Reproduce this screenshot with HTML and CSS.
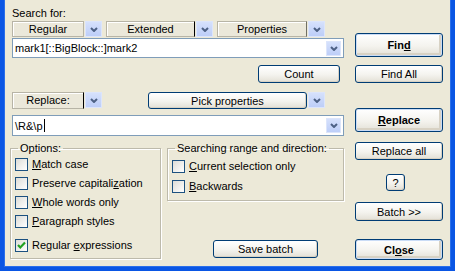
FILE: index.html
```html
<!DOCTYPE html>
<html>
<head>
    <meta charset="UTF-8">
    <title>Find and Replace</title>
    <link rel="stylesheet" href="styles.css">
</head>
<body>
    <div class="window">
        <div class="dialog">
            <div class="main">
                <div class="caption">Search for:</div>
                <div class="picks">
                    <div class="pick">
                        <span class="pick-box w-regular">Regular</span>
                        <span class="arrow"><svg width="8" height="5" viewBox="0 0 8 5"><path d="M1 1 L4 4 L7 1" fill="none" stroke="#4D6185" stroke-width="2"/></svg></span>
                    </div>
                    <div class="pick">
                        <span class="pick-box w-extended dark-edge">Extended</span>
                        <span class="arrow"><svg width="8" height="5" viewBox="0 0 8 5"><path d="M1 1 L4 4 L7 1" fill="none" stroke="#4D6185" stroke-width="2"/></svg></span>
                    </div>
                    <div class="pick pick-last">
                        <span class="pick-box w-properties grey-edge">Properties</span>
                        <span class="arrow"><svg width="8" height="5" viewBox="0 0 8 5"><path d="M1 1 L4 4 L7 1" fill="none" stroke="#4D6185" stroke-width="2"/></svg></span>
                    </div>
                </div>
                <div class="combo">
                    <span class="combo-text">mark1[::BigBlock::]mark2</span>
                    <span class="arrow arrow-in"><svg width="8" height="5" viewBox="0 0 8 5"><path d="M1 1 L4 4 L7 1" fill="none" stroke="#4D6185" stroke-width="2"/></svg></span>
                </div>
                <div class="count-row">
                    <button class="btn btn-count">Count</button>
                </div>
                <div class="picks picks-replace">
                    <div class="pick">
                        <span class="pick-box w-regular dark-edge">Replace:</span>
                        <span class="arrow"><svg width="8" height="5" viewBox="0 0 8 5"><path d="M1 1 L4 4 L7 1" fill="none" stroke="#4D6185" stroke-width="2"/></svg></span>
                    </div>
                    <div class="pick pick-props">
                        <button class="btn btn-pick">Pick properties</button>
                        <span class="arrow"><svg width="8" height="5" viewBox="0 0 8 5"><path d="M1 1 L4 4 L7 1" fill="none" stroke="#4D6185" stroke-width="2"/></svg></span>
                    </div>
                </div>
                <div class="combo combo-replace">
                    <span class="combo-text">\R&amp;\p<span class="caret"></span></span>
                    <span class="arrow arrow-in"><svg width="8" height="5" viewBox="0 0 8 5"><path d="M1 1 L4 4 L7 1" fill="none" stroke="#4D6185" stroke-width="2"/></svg></span>
                </div>
                <div class="groups">
                    <fieldset class="group group-options">
                        <legend>Options:</legend>
                        <div class="check"><span class="box"></span><span><u>M</u>atch case</span></div>
                        <div class="check"><span class="box"></span><span>Preserve capitali<u>z</u>ation</span></div>
                        <div class="check"><span class="box"></span><span><u>W</u>hole words only</span></div>
                        <div class="check"><span class="box"></span><span><u>P</u>aragraph styles</span></div>
                        <div class="check check-last"><span class="box"><svg width="11" height="11" viewBox="0 0 11 11"><path d="M2 5 L4.3 7.5 L9 2.5" fill="none" stroke="#21A121" stroke-width="2.2"/></svg></span><span>Regular <u>e</u>xpressions</span></div>
                    </fieldset>
                    <div class="side">
                        <fieldset class="group group-range">
                            <legend>Searching range and direction:</legend>
                            <div class="check"><span class="box"></span><span><u>C</u>urrent selection only</span></div>
                            <div class="check"><span class="box"></span><span><u>B</u>ackwards</span></div>
                        </fieldset>
                        <button class="btn btn-save">Save batch</button>
                    </div>
                </div>
            </div>
            <div class="actions">
                <button class="btn btn-default btn-find">Fin<u>d</u></button>
                <button class="btn btn-findall">Find All</button>
                <button class="btn btn-default btn-replace"><u>R</u>eplace</button>
                <button class="btn btn-replaceall">Replace all</button>
                <button class="btn btn-help">?</button>
                <button class="btn btn-batch">Batch &gt;&gt;</button>
                <button class="btn btn-default btn-close">Cl<u>o</u>se</button>
            </div>
        </div>
    </div>
</body>
</html>
```

FILE: styles.css
```css
* {
    box-sizing: border-box;
}
body {
    margin: 0;
    font-family: "Liberation Sans", Arial, sans-serif;
    font-size: 11px;
    color: #000;
}
.window {
    width: 455px;
    height: 271px;
    background-color: #ECE9D8;
    border: 4px solid #0A56E4;
    border-top: none;
    box-shadow: inset 1px 0 0 #2A6FEA, inset -1px -1px 0 #2A6FEA;
}
.dialog {
    display: flex;
    padding: 6px 0 0 8px;
}
.main {
    width: 332px;
    display: flex;
    flex-direction: column;
}
.caption {
    line-height: 15px;
}
.picks {
    display: flex;
    height: 16px;
}
.pick {
    display: flex;
    gap: 1px;
    margin-right: 4px;
}
.pick-box {
    display: block;
    height: 100%;
    line-height: 14px;
    text-align: center;
    background-color: #EBE8DA;
    border: 1px solid #B7B4A6;
    box-shadow: inset 1px 1px 0 #fff;
}
.dark-edge {
    border-right-color: #000;
}
.grey-edge {
    border-right-color: #716F64;
}
.w-regular {
    width: 72px;
}
.w-extended {
    width: 89px;
}
.w-properties {
    width: 90px;
}
.arrow {
    width: 17px;
    height: 16px;
    display: flex;
    align-items: center;
    justify-content: center;
    background: linear-gradient(#D6E1FC, #BDCEF8);
    border: 1px solid #DCE5FB;
}
.combo {
    margin-top: 1px;
    height: 20px;
    display: flex;
    align-items: center;
    justify-content: space-between;
    background-color: #fff;
    border: 1px solid #7F9DB9;
    padding: 0 2px 0 2px;
}
.combo-text {
    display: flex;
    align-items: center;
}
.arrow-in {
    width: 15px;
    height: 15px;
}
.caret {
    display: inline-block;
    width: 1px;
    height: 13px;
    margin-left: 1px;
    background-color: #000;
}
.count-row {
    display: flex;
    justify-content: flex-end;
    margin-top: 7px;
    padding-right: 4px;
}
.btn {
    font: inherit;
    color: #000;
    padding: 0;
    border: 1px solid #003C74;
    border-radius: 3px;
    background: linear-gradient(#FFFFFF, #F4F3EE 55%, #E3E0D6);
    box-shadow: inset -1px -1px 0 #D8D2C4;
}
.btn-count {
    width: 82px;
    height: 18px;
}
.picks-replace {
    margin-top: 9px;
    height: 17px;
}
.pick-props {
    margin-left: 42px;
}
.btn-pick {
    width: 159px;
    height: 17px;
}
.combo-replace {
    margin-top: 6px;
    height: 21px;
}
.groups {
    display: flex;
    margin-top: 6px;
    margin-left: -2px;
    gap: 6px;
}
.group {
    margin: 0;
    min-width: 0;
    padding: 0 4px;
    border: 1px solid #BDBAAB;
    box-shadow: inset 1px 1px 0 #fff, 1px 1px 0 #fff;
    display: flex;
    flex-direction: column;
}
.group legend {
    line-height: 13px;
    margin-left: 3px;
    padding: 0 2px;
}
.group-options {
    width: 151px;
    padding-top: 3px;
    padding-bottom: 6px;
    gap: 6px;
}
.check {
    display: flex;
    align-items: center;
    gap: 4px;
    height: 13px;
    line-height: 13px;
}
.check-last {
    margin-top: 5px;
}
.box {
    width: 13px;
    height: 13px;
    flex-shrink: 0;
    display: flex;
    align-items: center;
    justify-content: center;
    border: 1px solid #1C5180;
    background: linear-gradient(135deg, #DCDCD7, #FFFFFF);
}
.side {
    display: flex;
    flex-direction: column;
}
.group-range {
    width: 177px;
    padding-top: 5px;
    padding-bottom: 7px;
    gap: 7px;
}
.btn-save {
    width: 105px;
    height: 18px;
    margin-top: 39px;
    margin-left: 46px;
}
.actions {
    width: 88px;
    margin-left: 11px;
    margin-top: 27px;
    display: flex;
    flex-direction: column;
}
.btn-default {
    font-weight: bold;
    box-shadow: inset 0 0 0 1px #CADCF6, inset -1px -1px 0 2px #D8D2C4;
}
.btn-find {
    height: 24px;
}
.btn-findall {
    height: 18px;
    margin-top: 8px;
}
.btn-replace {
    height: 24px;
    margin-top: 25px;
}
.btn-replaceall {
    height: 18px;
    margin-top: 10px;
}
.btn-help {
    width: 19px;
    height: 17px;
    margin-top: 14px;
    margin-left: 31px;
}
.btn-batch {
    height: 19px;
    margin-top: 11px;
}
.btn-close {
    height: 21px;
    margin-top: 18px;
}
```
